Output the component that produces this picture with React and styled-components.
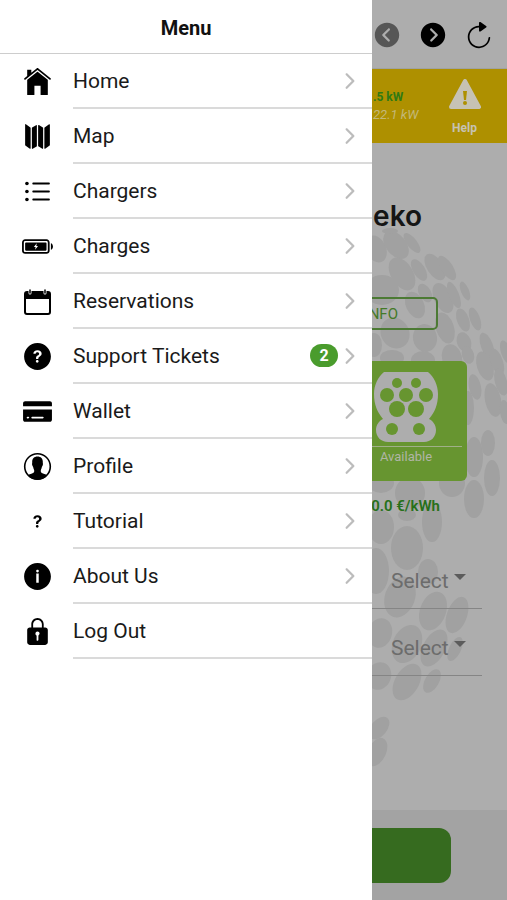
import React, { useState } from "react";
import styled, { createGlobalStyle } from "styled-components";
import {
  IoIosHome,
  IoIosMap,
  IoIosList,
  IoIosBatteryCharging,
  IoIosHelpCircle,
  IoIosCard,
  IoIosHelp,
  IoIosInformationCircle,
  IoIosLock,
  IoIosArrowForward,
  IoIosArrowDropleftCircle,
  IoIosArrowDroprightCircle,
  IoIosRefresh,
} from "react-icons/io";

const GlobalStyle = createGlobalStyle`
  * { box-sizing: border-box; }
  body {
    margin: 0;
    background: #adadad;
    font-family: Roboto, "Liberation Sans", sans-serif;
  }
  button, select { font-family: inherit; }
`;

const Layout = styled.div`
  position: relative;
  min-height: 100vh;
  display: flex;
  overflow: hidden;
`;

// Menu drawer
const Drawer = styled.nav`
  position: absolute;
  top: 0;
  bottom: 0;
  left: 0;
  z-index: 2;
  width: 73.4%;
  background: #fff;
`;

const DrawerTitle = styled.h1`
  display: flex;
  align-items: center;
  justify-content: center;
  height: 54px;
  margin: 0;
  padding-top: 2px;
  border-bottom: 1px solid #cdcdcd;
  font-size: 20px;
  font-weight: 700;
  color: #111;
`;

const MenuList = styled.ul`
  margin: 0;
  padding: 0;
  list-style: none;
`;

const MenuButton = styled.button`
  display: flex;
  align-items: stretch;
  width: 100%;
  height: 55px;
  padding: 0;
  border: none;
  background: none;
  color: #000;
  cursor: pointer;
`;

const IconSlot = styled.span`
  display: flex;
  align-items: center;
  justify-content: center;
  width: 73px;
  padding: 0 0 1px 1px;

  svg {
    width: 33px;
    height: 33px;
  }
`;

const MenuLabel = styled.span`
  flex: 1;
  display: flex;
  align-items: center;
  padding: 0 10px 0 0;
  border-bottom: 2px solid #dadada;
  font-size: 21px;
  text-align: left;
  color: #1a1a1a;
`;

const Badge = styled.span`
  min-width: 28px;
  margin-left: auto;
  border-radius: 12px;
  background: #4a9c2d;
  color: #fff;
  font-size: 16px;
  font-weight: 700;
  line-height: 23px;
  text-align: center;
`;

const Arrow = styled(IoIosArrowForward)`
  width: 24px;
  height: 24px;
  margin-left: ${(props) => (props.$afterBadge ? "0" : "auto")};
  color: #bcbcbc;
`;

// Page behind the menu
const Page = styled.main`
  position: relative;
  flex: 1;
  display: flex;
  flex-direction: column;
  background: #adadad;
`;

const Toolbar = styled.header`
  display: flex;
  align-items: center;
  justify-content: flex-end;
  gap: 16px;
  height: 68px;
  padding: 2px 13px 0 0;
`;

const ToolButton = styled.button`
  display: flex;
  padding: 0;
  border: none;
  background: none;
  color: ${(props) => (props.disabled ? "#565656" : "#000")};

  svg {
    width: 30px;
    height: 30px;
  }
`;

const Banner = styled.section`
  display: flex;
  align-items: center;
  justify-content: flex-end;
  height: 75px;
  padding-right: 26px;
  border-top: 1px solid #a0a2a0;
  background: #ae9000;
`;

const Readings = styled.div`
  width: 75px;
  font-size: 12px;
  line-height: 17px;
`;

const Power = styled.div`
  color: #2f7a14;
  font-weight: 700;
`;

const Limit = styled.div`
  color: #c3b878;
  font-size: 13px;
  font-style: italic;
`;

const HelpButton = styled.button`
  display: flex;
  flex-direction: column;
  align-items: center;
  width: 33px;
  gap: 12px;
  padding: 2px 0 0;
  border: none;
  background: none;
  color: #c6c2b4;
  font-size: 12px;
  font-weight: 700;
`;

const Dots = styled.svg`
  position: absolute;
  top: 220px;
  right: 0;
  width: 147px;
  height: 560px;
  fill: #a1a1a1;
`;

const Content = styled.div`
  position: relative;
  flex: 1;
  display: flex;
  flex-direction: column;
  align-items: flex-end;
`;

const Station = styled.h2`
  margin: 55px 85px 0 0;
  font-family: Inter, sans-serif;
  font-size: 28px;
  font-weight: 600;
  line-height: 36px;
  color: #151515;
`;

const InfoButton = styled.button`
  align-self: stretch;
  height: 33px;
  margin: 63px 69px 0;
  padding: 0 38px;
  border: 2px solid #4c7a34;
  border-radius: 5px;
  background: none;
  color: #447a28;
  font-size: 15px;
  text-align: right;
`;

const Connector = styled.section`
  display: flex;
  flex-direction: column;
  align-items: center;
  width: 122px;
  height: 120px;
  margin: 31px 40px 0 0;
  padding: 11px 5px 0;
  border-radius: 6px;
  background: #679530;
  color: #b0b5a5;
`;

const Status = styled.div`
  width: 100%;
  margin-top: 4px;
  border-top: 1px solid #a0b088;
  font-size: 13px;
  line-height: 20px;
  text-align: center;
`;

const Price = styled.div`
  margin: 15px 67px 0 0;
  color: #27701a;
  font-size: 15px;
  font-weight: 600;
  line-height: 20px;
`;

const Field = styled.div`
  position: relative;
  align-self: stretch;
  display: flex;
  justify-content: flex-end;
  margin: ${(props) => (props.$first ? "38px" : "12px")} 25px 0;
  border-bottom: 1px solid #858585;
`;

const Select = styled.select`
  width: 91px;
  height: 54px;
  padding: 0;
  border: none;
  appearance: none;
  background: none;
  color: #6c6c6c;
  font-size: 21px;
`;

const Caret = styled.svg`
  position: absolute;
  right: 16px;
  top: 20px;
  width: 12px;
  height: 6px;
  fill: #5c5c5c;
  pointer-events: none;
`;

const Footer = styled.footer`
  display: flex;
  position: relative;
  height: 90px;
  padding: 18px 56px 17px;
  background: #a3a3a3;
`;

const StartButton = styled.button`
  flex: 1;
  border: none;
  border-radius: 12px;
  background: #366b1f;
`;

const CalendarIcon = () => (
  <svg viewBox="0 0 33 33">
    <rect x="4" y="7" width="25" height="22" rx="2" fill="none" stroke="#000" strokeWidth="2" />
    <path d="M4 7h25v7H4z" />
    <path d="M9 4v4M24 4v4" stroke="#fff" strokeWidth="3" strokeLinecap="round" />
    <path d="M9 5v3M24 5v3" stroke="#000" strokeWidth="1.5" strokeLinecap="round" />
  </svg>
);

const ProfileIcon = () => (
  <svg viewBox="0 0 33 33">
    <circle cx="16.5" cy="16.5" r="12.8" fill="none" stroke="#000" strokeWidth="1.6" />
    <path d="M16.5 6.5c-3.6 0-5.5 2.4-5.3 5.8.1 1-.4 1.400 0 2.700.3 1.100.8 1.300 1 2.300.2 1.500.9 2.200 1 3.200.1 1.700-.4 2.300-2.200 2.900-1.700.5-3.400 1-4.200 2.100a12.800 12.800 0 0 0 19.400 0c-.8-1.100-2.500-1.600-4.200-2.100-1.800-.6-2.300-1.200-2.200-2.900.1-1 .8-1.700 1-3.200.2-1 .7-1.200 1-2.300.4-1.300-.1-1.700 0-2.700.2-3.400-1.700-5.800-5.300-5.800z" />
  </svg>
);

const WarningIcon = () => (
  <svg width="32" height="30" viewBox="0 0 32 30">
    <path
      d="M16 2 30 28H2z"
      fill="currentColor"
      stroke="currentColor"
      strokeWidth="4"
      strokeLinejoin="round"
    />
    <path d="M14 12h4l-1 9h-2z" fill="#ae9000" />
    <circle cx="16" cy="24" r="2" fill="#ae9000" />
  </svg>
);

const menuItems = [
  { label: "Home", icon: IoIosHome },
  { label: "Map", icon: IoIosMap },
  { label: "Chargers", icon: IoIosList },
  { label: "Charges", icon: IoIosBatteryCharging },
  { label: "Reservations", icon: CalendarIcon },
  { label: "Support Tickets", icon: IoIosHelpCircle, badge: 2 },
  { label: "Wallet", icon: IoIosCard },
  { label: "Profile", icon: ProfileIcon },
  { label: "Tutorial", icon: IoIosHelp },
  { label: "About Us", icon: IoIosInformationCircle },
  { label: "Log Out", icon: IoIosLock, last: true },
];

// cx, cy, rx, ry, rotation
const dots = [
  [376, 249, 10, 14, -25], [396, 245, 10, 16, -40], [412, 243, 5, 12, -38],
  [390, 231, 8, 3, 0], [402, 274, 11, 18, -32], [419, 270, 6, 12, -32],
  [435, 267, 8, 15, -33], [447, 268, 6, 14, -33], [382, 290, 17, 15, 0],
  [425, 293, 6, 10, -30], [443, 298, 9, 16, -25], [454, 295, 5, 14, -22],
  [465, 291, 4, 10, -22], [415, 305, 9, 14, -25], [445, 328, 9, 16, -18],
  [463, 320, 6, 12, -20], [475, 319, 5, 12, -20], [395, 333, 14, 16, -30],
  [425, 338, 12, 14, -10], [374, 345, 8, 12, 0], [464, 342, 7, 10, -20],
  [487, 346, 6, 14, -20], [392, 358, 12, 8, 0], [423, 360, 12, 9, 0],
  [452, 358, 10, 14, -15], [468, 355, 6, 9, -15], [485, 366, 8, 15, -18],
  [497, 362, 6, 14, -18], [475, 387, 6, 13, -12], [493, 400, 8, 17, -12],
  [501, 382, 6, 14, -15], [506, 352, 5, 12, -18], [505, 412, 5, 12, -8],
  [468, 408, 6, 17, 0], [474, 457, 9, 20, 0], [488, 443, 7, 13, 0],
  [492, 478, 8, 18, 0], [474, 499, 10, 19, 0], [452, 483, 13, 14, 0],
  [410, 493, 15, 16, 0], [381, 483, 13, 10, 0], [381, 527, 13, 17, 0],
  [407, 548, 16, 22, 0], [407, 515, 9, 6, 0], [432, 522, 10, 20, 0],
  [376, 571, 13, 23, 0], [428, 572, 10, 13, 0], [400, 597, 15, 21, 20],
  [433, 611, 13, 20, 20], [457, 615, 10, 19, 20], [380, 633, 12, 15, 15],
  [407, 644, 14, 20, 25], [434, 648, 11, 20, 28], [455, 649, 6, 13, 25],
  [379, 676, 12, 14, 20], [407, 682, 12, 20, 30], [432, 681, 7, 13, 30],
  [379, 728, 8, 13, 40], [377, 752, 9, 15, 25],
];

function App() {
  const [open] = useState(true);

  return (
    <Layout>
      <GlobalStyle />

      {/* Menu */}
      {open && (
        <Drawer>
          <DrawerTitle>Menu</DrawerTitle>
          <MenuList>
            {menuItems.map(({ label, icon: Icon, badge, last }) => (
              <li key={label}>
                <MenuButton type="button">
                  <IconSlot>
                    <Icon />
                  </IconSlot>
                  <MenuLabel>
                    {label}
                    {badge && <Badge>{badge}</Badge>}
                    {!last && <Arrow $afterBadge={Boolean(badge)} />}
                  </MenuLabel>
                </MenuButton>
              </li>
            ))}
          </MenuList>
        </Drawer>
      )}

      {/* Charger page */}
      <Page>
        <Dots viewBox="360 220 147 560">
          {dots.map(([cx, cy, rx, ry, angle]) => (
            <ellipse
              key={`${cx}-${cy}`}
              cx={cx}
              cy={cy}
              rx={rx}
              ry={ry}
              transform={`rotate(${angle} ${cx} ${cy})`}
            />
          ))}
        </Dots>

        <Toolbar>
          <ToolButton type="button" aria-label="Previous" disabled>
            <IoIosArrowDropleftCircle />
          </ToolButton>
          <ToolButton type="button" aria-label="Next">
            <IoIosArrowDroprightCircle />
          </ToolButton>
          <ToolButton type="button" aria-label="Refresh">
            <IoIosRefresh />
          </ToolButton>
        </Toolbar>

        <Banner>
          <Readings>
            <Power>.5 kW</Power>
            <Limit>22.1 kW</Limit>
          </Readings>
          <HelpButton type="button">
            <WarningIcon />
            Help
          </HelpButton>
        </Banner>

        <Content>
          <Station>eko</Station>
          <InfoButton type="button">INFO</InfoButton>

          <Connector>
            <svg width="64" height="70" viewBox="0 0 64 70">
              <path
                fill="#adadad"
                d="M10 0h44c6 5 10 13 10 22 0 10-3 18-9 25 4 2 7 6 7 11 0 7-5 12-12 12H14C7 70 2 65 2 58c0-5 3-9 7-11C3 40 0 32 0 22 0 13 4 5 10 0z"
              />
              <g fill="#679530">
                <circle cx="23" cy="11" r="5" />
                <circle cx="42" cy="11" r="5" />
                <circle cx="13" cy="23" r="7" />
                <circle cx="32" cy="23" r="7" />
                <circle cx="52" cy="23" r="7" />
                <circle cx="23" cy="37" r="8" />
                <circle cx="42" cy="37" r="8" />
                <circle cx="18" cy="57" r="6" />
                <circle cx="45" cy="57" r="6" />
              </g>
            </svg>
            <Status>Available</Status>
          </Connector>

          <Price>0.0 €/kWh</Price>

          <Field $first>
            <Select aria-label="Vehicle">
              <option>Select</option>
            </Select>
            <Caret viewBox="0 0 12 6">
              <path d="M0 0h12L6 6z" />
            </Caret>
          </Field>
          <Field>
            <Select aria-label="Payment method">
              <option>Select</option>
            </Select>
            <Caret viewBox="0 0 12 6">
              <path d="M0 0h12L6 6z" />
            </Caret>
          </Field>
        </Content>

        <Footer>
          <StartButton type="button" aria-label="Start" />
        </Footer>
      </Page>
    </Layout>
  );
}

export default App;
